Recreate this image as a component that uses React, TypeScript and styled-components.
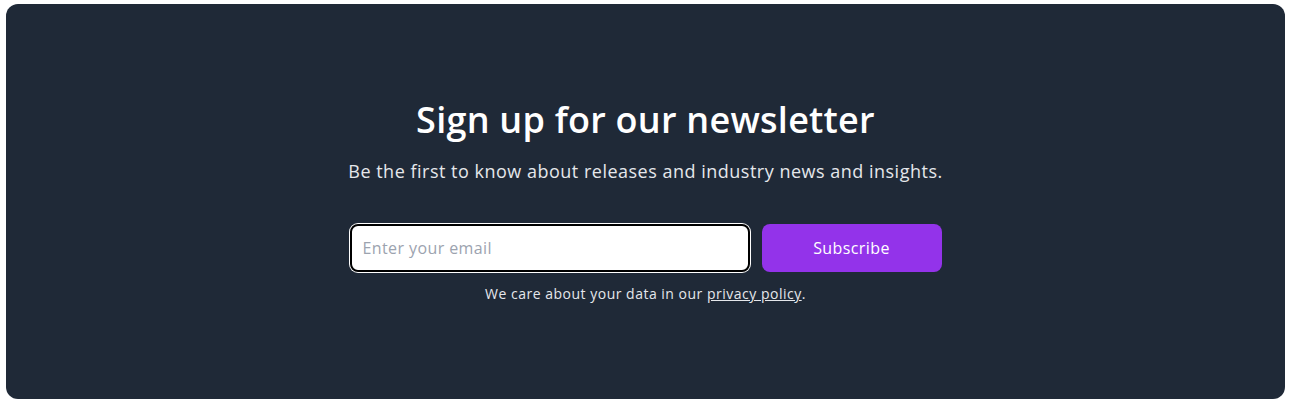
import React from "react";
import styled, { createGlobalStyle } from "styled-components";

const Global = createGlobalStyle`
  html, body { margin: 0; padding: 0; background: #ffffff; }
  body { font-family: "Open Sans", "Noto Sans", sans-serif; }
  * { box-sizing: border-box; }
`;

const Page = styled.div`
  padding: 4px 12px 9px 6px;
`;

const Card = styled.section`
  height: 395px;
  background: #1f2937;
  border-radius: 12px;
  display: flex;
  flex-direction: column;
  align-items: center;
  justify-content: center;
  color: #ffffff;
`;

const Title = styled.h2`
  margin: 0;
  font-size: 36px;
  font-weight: 600;
  line-height: 40px;
  letter-spacing: 0.25px;
`;

const Subtitle = styled.p`
  margin: 17px 0 0;
  font-size: 18px;
  line-height: 28px;
  letter-spacing: 0.5px;
  color: #e5e7eb;
`;

const Form = styled.form`
  margin-top: 39px;
  display: flex;
  gap: 12px;
  width: 592px;
`;

const EmailInput = styled.input`
  flex: 1;
  height: 48px;
  border: 2px solid #000000;
  box-shadow: 0 0 0 1px #ffffff;
  border-radius: 8px;
  background: #ffffff;
  padding: 0 11px;
  font: inherit;
  font-size: 16px;
  letter-spacing: 0.4px;
  color: #111827;
  caret-color: #000000;
  outline: none;
  &::placeholder { color: #9ca3af; }
`;

const SubmitButton = styled.button`
  width: 180px;
  height: 48px;
  border: none;
  border-radius: 8px;
  background: #9333ea;
  color: #ffffff;
  font: inherit;
  font-size: 16px;
  font-weight: 500;
  letter-spacing: 0.4px;
  cursor: pointer;
`;

const Note = styled.p`
  margin: 12px 0 0;
  font-size: 14px;
  line-height: 20px;
  letter-spacing: 0.5px;
  color: #e5e7eb;
`;

const Link = styled.a`
  color: #e5e7eb;
  text-decoration: underline;
`;

export default function App() {
  const ref = React.useRef<HTMLInputElement>(null);
  React.useEffect(() => { ref.current?.focus(); }, []);
  return (
    <>
      <Global />
      <Page>
        <Card>
          <Title>Sign up for our newsletter</Title>
          <Subtitle>Be the first to know about releases and industry news and insights.</Subtitle>
          <Form onSubmit={(e) => e.preventDefault()}>
            <EmailInput ref={ref} type="email" placeholder="Enter your email" />
            <SubmitButton type="submit">Subscribe</SubmitButton>
          </Form>
          <Note>
            We care about your data in our <Link href="#">privacy policy</Link>.
          </Note>
        </Card>
      </Page>
    </>
  );
}
